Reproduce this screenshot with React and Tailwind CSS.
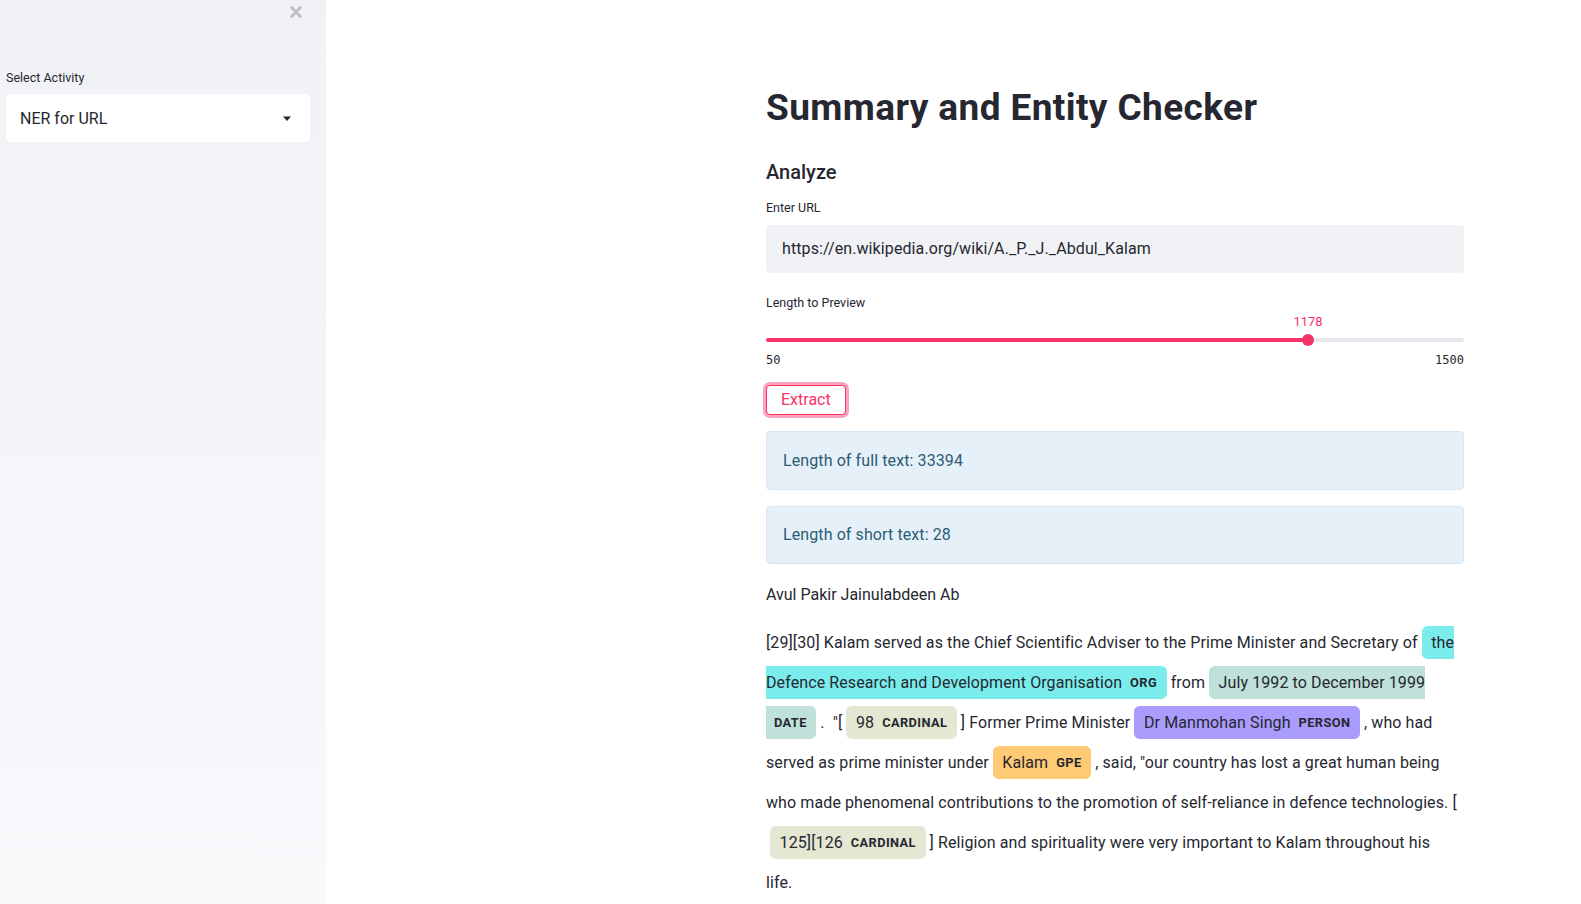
import React from "react";

const F = { fontFamily: "Roboto, 'Noto Sans', sans-serif" };

function Ent({ children, label, color, className = "" }) {
  return (
    <mark
      className={`text-[#262730] rounded-[0.35em] mx-[0.25em] px-[0.6em] py-[0.45em] leading-none ${color} ${className}`}
    >
      {children}
      <span className="text-[0.8em] font-bold leading-none rounded-[0.35em] align-middle ml-2 uppercase tracking-[0.4px]">
        {label}
      </span>
    </mark>
  );
}

export default function App() {
  return (
    <div className="flex min-h-[904px] w-full bg-white text-[#262730]" style={F}>
      <aside className="w-[326px] shrink-0 bg-gradient-to-b from-[#f0f2f6] to-[#f8f9fb] relative">
        <button className="absolute left-[289px] top-[5px] leading-none">
          <svg width="14" height="14" viewBox="0 0 14 14">
            <path d="M2.5 2.5 L11.5 11.5 M11.5 2.5 L2.5 11.5" stroke="#bcbec4" strokeWidth="2.8" strokeLinecap="round" />
          </svg>
        </button>
        <div className="pt-[70px] px-[6px]">
          <div className="text-[12.5px] text-[#262730] mb-[8px] leading-4">Select Activity</div>
          <div className="h-[48px] w-[304px] bg-white rounded-[4px] flex items-center justify-between pl-[14px] pr-[18px] pt-[2px]">
            <span className="text-[16px] text-[#262730]">NER for URL</span>
            <svg width="10" height="6" viewBox="0 0 10 6">
              <path d="M1 0.5 L9 0.5 L5 5 Z" fill="#262730" />
            </svg>
          </div>
        </div>
      </aside>
      <main className="flex-1 pl-[440px]">
        <div className="w-[698px] pt-[84px] pb-[40px]">
          <h1 className="text-[37px] font-bold leading-[48px] text-[#262730] tracking-[0.4px]">
            Summary and Entity Checker
          </h1>
          <h3 className="text-[20px] font-medium mt-[27px] leading-[26px]">Analyze</h3>
          <div className="text-[12.5px] mt-[15px] leading-4">Enter URL</div>
          <div className="mt-[9px] h-[48px] bg-[#f0f2f6] rounded-[4px] flex items-center px-[16px] text-[16px] tracking-[0.1px]">
            https://en.wikipedia.org/wiki/A._P._J._Abdul_Kalam
          </div>
          <div className="text-[12.5px] mt-[22px] leading-4">Length to Preview</div>
          <div className="relative h-[39px] mt-[2px]">
            <div className="absolute left-[542px] top-[1px] -translate-x-1/2 text-[13px] text-[#f63366] leading-4">
              1178
            </div>
            <div className="absolute left-0 right-0 top-[25px] h-[4px] rounded bg-[#e6e8ed]" />
            <div className="absolute left-0 w-[542px] top-[25px] h-[4px] rounded bg-[#f63366]" />
            <div className="absolute left-[536px] top-[21px] w-[12px] h-[12px] rounded-full bg-[#f63366]" />
          </div>
          <div
            className="flex justify-between text-[12px] leading-4 text-[#262730]"
            style={{ fontFamily: "'DejaVu Sans Mono', monospace" }}
          >
            <span>50</span>
            <span>1500</span>
          </div>
          <button className="mt-[17px] h-[30px] px-[14px] rounded-[4px] border border-[#f63366] text-[#f63366] text-[16px] leading-none shadow-[0_0_0_3px_rgba(246,51,102,0.45)] bg-white">
            Extract
          </button>
          <div className="mt-[16px] h-[59px] rounded-[4px] bg-[#e6f0f9] border border-[#d8e6f3] flex items-center px-[16px] text-[16px] text-[#2b5c74] tracking-[0.1px]">
            Length of full text: 33394
          </div>
          <div className="mt-[16px] h-[58px] rounded-[4px] bg-[#e6f0f9] border border-[#d8e6f3] flex items-center px-[16px] text-[16px] text-[#2b5c74] tracking-[0.1px]">
            Length of short text: 28
          </div>
          <p className="mt-[19px] text-[16px] leading-6">Avul Pakir Jainulabdeen Ab</p>
          <div className="mt-[16px] text-[16px] leading-[2.5] whitespace-nowrap tracking-[0.1px]">
            [29][30] Kalam served as the Chief Scientific Adviser to the Prime Minister and Secretary of
            <Ent label="ORG" color="bg-[#7aecec]">
              the
              <br />
              Defence Research and Development Organisation
            </Ent>
            from
            <Ent label="DATE" color="bg-[#bfe1d9]">
              July 1992 to December 1999
              <br />
            </Ent>
            . &nbsp;"[
            <Ent label="CARDINAL" color="bg-[#e4e7d2]">98</Ent>
            ] Former Prime Minister
            <Ent label="PERSON" color="bg-[#aa9cfc]">Dr Manmohan Singh</Ent>
            , who had
            <br />
            served as prime minister under
            <Ent label="GPE" color="bg-[#feca74]">Kalam</Ent>
            , said, "our country has lost a great human being
            <br />
            who made phenomenal contributions to the promotion of self-reliance in defence technologies. [
            <br />
            <Ent label="CARDINAL" color="bg-[#e4e7d2]">125][126</Ent>
            ] Religion and spirituality were very important to Kalam throughout his
            <br />
            life.
          </div>
        </div>
      </main>
    </div>
  );
}
